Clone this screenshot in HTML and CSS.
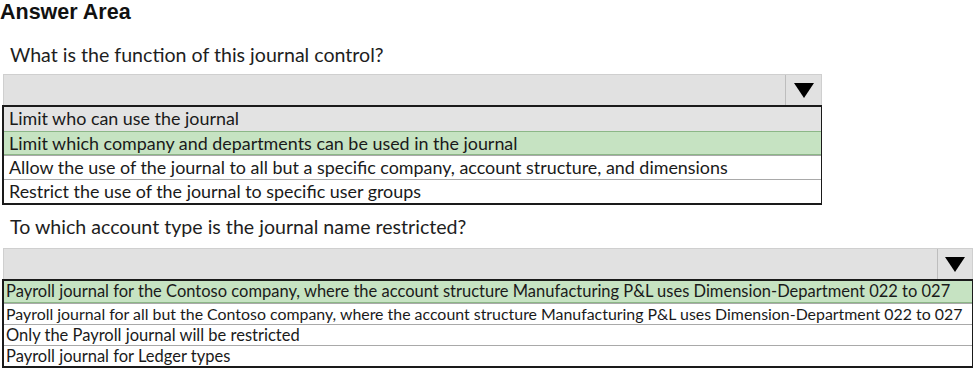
FILE: index.html
```html
<!DOCTYPE html>
<html lang="en">
<head>
<meta charset="utf-8">
<title>Answer Area</title>
<link rel="stylesheet" href="styles.css">
</head>
<body>
<h1 class="title">Answer Area</h1>

<section class="question q1">
  <p class="prompt">What is the function of this journal control?</p>
  <div class="select">
    <div class="select-field"></div>
    <div class="select-arrow"><svg viewBox="0 0 20 15" class="tri"><polygon points="0,0 20,0 10,15"/></svg></div>
  </div>
  <ul class="options">
    <li class="opt hover">Limit who can use the journal</li>
    <li class="opt selected">Limit which company and departments can be used in the journal</li>
    <li class="opt">Allow the use of the journal to all but a specific company, account structure, and dimensions</li>
    <li class="opt">Restrict the use of the journal to specific user groups</li>
  </ul>
</section>

<section class="question q2">
  <p class="prompt">To which account type is the journal name restricted?</p>
  <div class="select">
    <div class="select-field"></div>
    <div class="select-arrow"><svg viewBox="0 0 20 15" class="tri"><polygon points="0,0 20,0 10,15"/></svg></div>
  </div>
  <ul class="options">
    <li class="opt selected">Payroll journal for the Contoso company, where the account structure Manufacturing P&amp;L uses Dimension-Department 022 to 027</li>
    <li class="opt narrow">Payroll journal for all but the Contoso company, where the account structure Manufacturing P&amp;L uses Dimension-Department 022 to 027</li>
    <li class="opt">Only the Payroll journal will be restricted</li>
    <li class="opt">Payroll journal for Ledger types</li>
  </ul>
</section>
</body>
</html>
```

FILE: styles.css
```css
html, body {
  margin: 0;
  padding: 0;
  background: #ffffff;
}
body {
  width: 974px;
  height: 369px;
  overflow: hidden;
  color: #1a1a1a;
  font-family: Lato, "Open Sans", sans-serif;
}
.title {
  margin: 0;
  padding-left: 0;
  font-family: "Liberation Sans", Arial, sans-serif;
  font-weight: bold;
  font-size: 21.5px;
  line-height: 24px;
  height: 24px;
  color: #111;
}
.question {
  padding-left: 2px;
}
.prompt {
  margin: 0;
  padding-left: 8px;
  font-size: 19.6px;
  line-height: 24px;
  color: #1e1e1e;
}
.q1 .prompt { margin-top: 19px; }
.q1 { width: 820px; }
.q2 { width: 971px; }
.select {
  display: flex;
  margin-top: 7px;
  margin-left: 1px;
  height: 31px;
  background: #e1e1e1;
  border: 1px solid #cfcfcf;
  border-bottom: none;
  box-sizing: border-box;
}
.q2 .select { margin-top: 9px; }
.select-field {
  flex: 1;
}
.select-arrow {
  width: 35px;
  border-left: 1px solid #bdbdbd;
  display: flex;
  align-items: center;
  justify-content: center;
}
.q2 .select-arrow { width: 34px; }
.tri {
  width: 20px;
  height: 15px;
  fill: #000;
}
.options {
  list-style: none;
  margin: 0;
  padding: 0;
  border: 1px solid #1a1a1a;
  border-width: 2px 1px 2px 2px;
  background: #fff;
}
.opt {
  box-sizing: border-box;
  border-top: 1px solid #a9a9a9;
  white-space: nowrap;
  color: #1a1a1a;
}
.opt:first-child { border-top: none; }
.q1 .opt {
  height: 24px;
  line-height: 23px;
  font-size: 17.9px;
  padding-left: 5px;
}
.q2 .opt {
  height: 21px;
  line-height: 20px;
  font-size: 16.5px;
  padding-left: 2px;
}
.q2 .opt:first-child { height: 22px; line-height: 21px; }
.q2 .opt.narrow { font-size: 15.9px; }
.opt.hover { background: #e3e3e3; }
.opt.selected {
  background: #c6e3c2;
  border-top-color: #8cb787;
  border-bottom: 1px solid #8cb787;
}
.q2 .prompt { margin-top: 10px; }
```
